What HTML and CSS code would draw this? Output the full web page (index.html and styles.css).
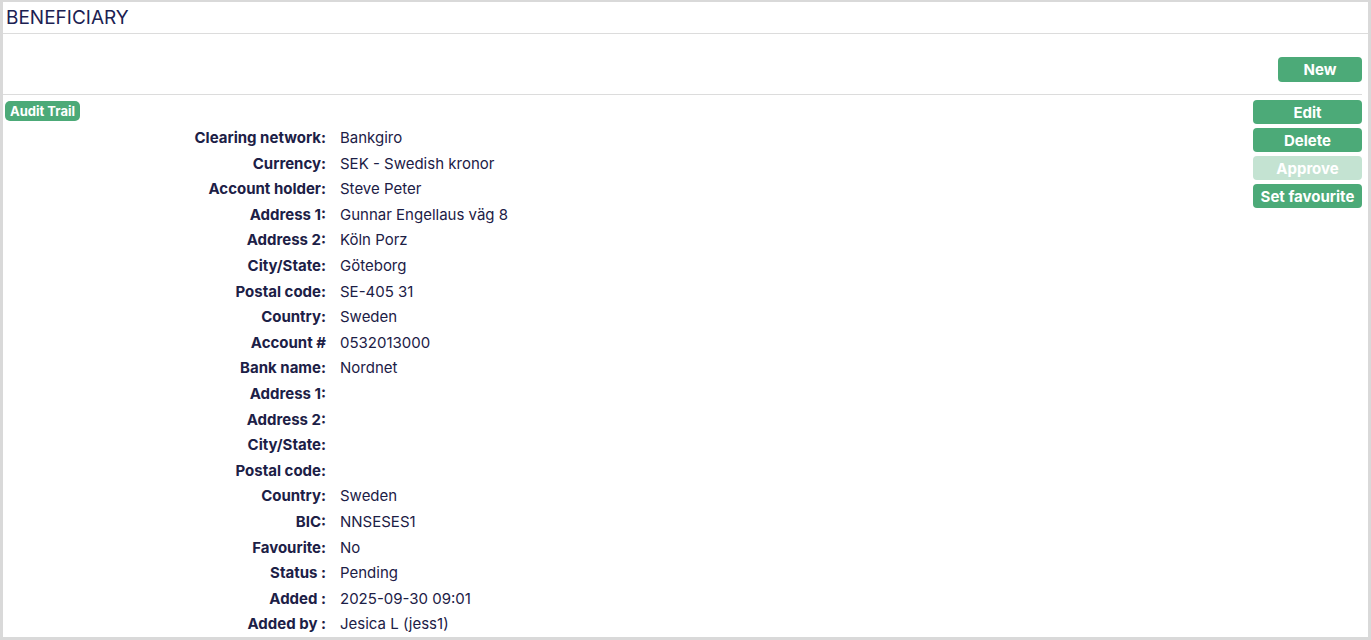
FILE: index.html
```html
<!DOCTYPE html>
<html lang="en">
<head>
    <meta charset="UTF-8">
    <title>Beneficiary</title>
    <link rel="stylesheet" href="styles.css">
</head>
<body>
    <div class="panel">
        <div class="panel-header">BENEFICIARY</div>
        <div class="panel-body">
            <div class="toolbar">
                <button class="btn btn-lg">New</button>
            </div>
            <div class="details">
                <div class="details-main">
                    <button class="btn btn-sm">Audit Trail</button>
                    <div class="fields">
                        <div class="label">Clearing network:</div><div class="value">Bankgiro</div>
                        <div class="label">Currency:</div><div class="value">SEK - Swedish kronor</div>
                        <div class="label">Account holder:</div><div class="value">Steve Peter</div>
                        <div class="label">Address 1:</div><div class="value">Gunnar Engellaus väg 8</div>
                        <div class="label">Address 2:</div><div class="value">Köln Porz</div>
                        <div class="label">City/State:</div><div class="value">Göteborg</div>
                        <div class="label">Postal code:</div><div class="value">SE-405 31</div>
                        <div class="label">Country:</div><div class="value">Sweden</div>
                        <div class="label">Account #</div><div class="value">0532013000</div>
                        <div class="label">Bank name:</div><div class="value">Nordnet</div>
                        <div class="label">Address 1:</div><div class="value"></div>
                        <div class="label">Address 2:</div><div class="value"></div>
                        <div class="label">City/State:</div><div class="value"></div>
                        <div class="label">Postal code:</div><div class="value"></div>
                        <div class="label">Country:</div><div class="value">Sweden</div>
                        <div class="label">BIC:</div><div class="value">NNSESES1</div>
                        <div class="label">Favourite:</div><div class="value">No</div>
                        <div class="label">Status :</div><div class="value">Pending</div>
                        <div class="label">Added :</div><div class="value">2025-09-30 09:01</div>
                        <div class="label">Added by :</div><div class="value">Jesica L (jess1)</div>
                    </div>
                </div>
                <div class="actions">
                    <button class="btn">Edit</button>
                    <button class="btn">Delete</button>
                    <button class="btn" disabled>Approve</button>
                    <button class="btn">Set favourite</button>
                </div>
            </div>
        </div>
    </div>
</body>
</html>
```

FILE: styles.css
```css
html, body {
    height: 100%;
}

body {
    margin: 0;
    padding: 2px 3px 3px 3px;
    box-sizing: border-box;
    background: #d9d9d9;
    font-family: Inter, "Liberation Sans", sans-serif;
    color: #1c2046;
    overflow: hidden;
}

.panel {
    background: #fff;
    height: 100%;
}

.panel-header {
    height: 31px;
    line-height: 31px;
    padding-left: 3px;
    font-size: 19px;
    color: #1b2152;
    border-bottom: 1px solid #dcdcdc;
}

.panel-body {
    padding-right: 6px;
}

/* Кнопки */
.btn {
    background: #4caa78;
    color: #fff;
    border: none;
    border-radius: 4px;
    font-family: inherit;
    font-weight: 700;
    font-size: 15px;
    height: 24px;
    padding: 0 6px;
    cursor: pointer;
}

.btn:disabled {
    background: #c4e3d2;
    cursor: default;
}

.btn-lg {
    width: 84px;
    height: 25px;
}

.btn-sm {
    font-size: 13px;
    height: 20px;
    padding: 0 5px;
    border-radius: 5px;
}

.toolbar {
    height: 61px;
    box-sizing: border-box;
    padding-top: 23px;
    border-bottom: 1px solid #dcdcdc;
    display: flex;
    justify-content: flex-end;
    align-items: flex-start;
}

/* Детали */
.details {
    display: flex;
    padding-top: 5px;
}

.details-main {
    flex: 1;
    padding-left: 2px;
}

.fields {
    display: grid;
    grid-template-columns: 321px 1fr;
    column-gap: 14px;
    margin-top: 4px;
    font-size: 15px;
    line-height: 25.6px;
}

.label {
    text-align: right;
    font-weight: 700;
}

.value {
    min-height: 25.6px;
}

.actions {
    width: 109px;
    display: flex;
    flex-direction: column;
    gap: 4px;
}

.actions .btn {
    width: 100%;
}
```
